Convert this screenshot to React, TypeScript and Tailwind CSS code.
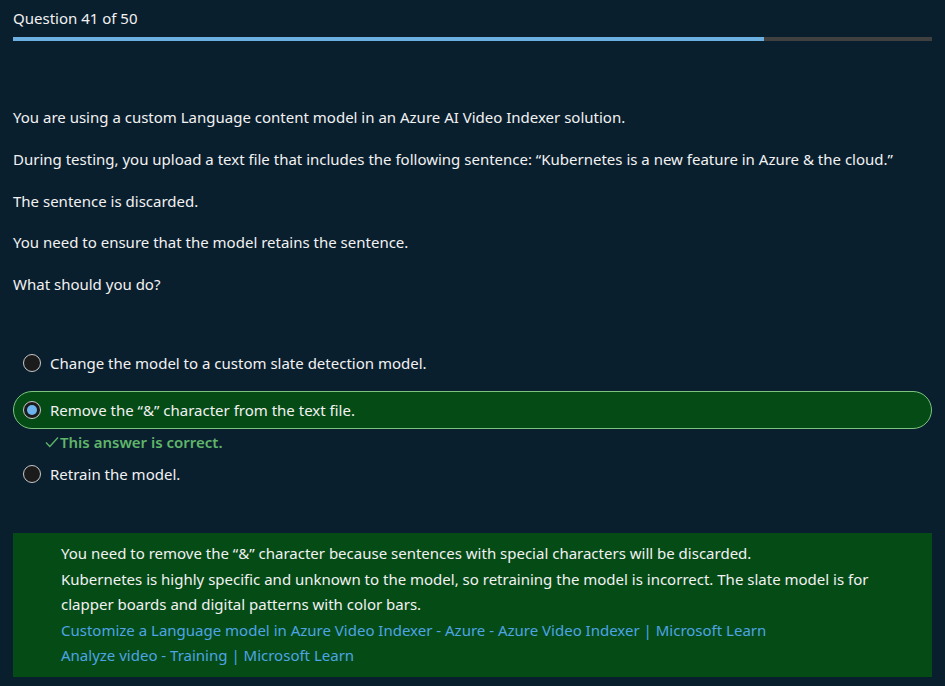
import { useState } from 'react';

const options = [
  'Change the model to a custom slate detection model.',
  'Remove the “&” character from the text file.',
  'Retrain the model.',
];

function Radio({ checked }: { checked: boolean }) {
  return (
    <span className="flex h-[18px] w-[18px] shrink-0 items-center justify-center rounded-full border border-[#c8c8c8] bg-[#1b1b1b]">
      {checked && <span className="h-[10px] w-[10px] rounded-full bg-[#6cb4ee]" />}
    </span>
  );
}

export default function App() {
  const [selected] = useState(1);

  return (
    <div
      className="min-h-screen bg-[#0a1f2e] px-[13px] text-[15px] text-[#f2f2f2]"
      style={{ fontFamily: '"Noto Sans", "Open Sans", sans-serif' }}
    >
      {/* Header */}
      <div className="pt-[8px] text-[15px] leading-5">Question 41 of 50</div>
      <div className="mt-[9px] h-[4px] w-full bg-[#404040]">
        <div className="h-full w-[81.7%] bg-[#6cb0e2]" />
      </div>

      {/* Question text */}
      <div className="mt-[66px] flex flex-col gap-[20.75px] leading-[21px]">
        <p>You are using a custom Language content model in an Azure AI Video Indexer solution.</p>
        <p>During testing, you upload a text file that includes the following sentence: “Kubernetes is a new feature in Azure &amp; the cloud.”</p>
        <p>The sentence is discarded.</p>
        <p>You need to ensure that the model retains the sentence.</p>
        <p>What should you do?</p>
      </div>

      {/* Options */}
      <div className="mt-[49px] flex flex-col">
        {options.map((opt, i) => (
          <div key={opt}>
            <div
              className={
                i === selected
                  ? 'flex h-[38px] items-center gap-[9px] rounded-full border border-[#7cc47f] bg-[#054b16] pl-[9px]'
                  : 'flex h-[38px] items-center gap-[9px] border border-transparent pl-[9px]'
              }
            >
              <Radio checked={i === selected} />
              <span className="leading-5">{opt}</span>
            </div>
            {i === 0 && <div className="h-[9px]" />}
            {i === selected && (
              <div className="flex h-[26px] items-center pl-[32px] font-semibold leading-5 text-[#5fb56a]">
                <svg width="14" height="12" viewBox="0 0 14 12" fill="none" className="mr-[1px]">
                  <path d="M1 6.5 L4.8 10.5 L13 1.5" stroke="#5fb56a" strokeWidth="1.3" />
                </svg>
                This answer is correct.
              </div>
            )}
          </div>
        ))}
      </div>

      {/* Explanation */}
      <div className="mt-[40px] bg-[#054b16] py-[8px] pl-[48px] pr-[20px] leading-[25.5px]">
        <p>You need to remove the “&amp;” character because sentences with special characters will be discarded.</p>
        <p>
          Kubernetes is highly specific and unknown to the model, so retraining the model is incorrect. The slate model is for
          clapper boards and digital patterns with color bars.
        </p>
        <p>
          <a className="text-[#4ea4e4]" href="#">
            Customize a Language model in Azure Video Indexer - Azure - Azure Video Indexer | Microsoft Learn
          </a>
        </p>
        <p>
          <a className="text-[#4ea4e4]" href="#">
            Analyze video - Training | Microsoft Learn
          </a>
        </p>
      </div>
    </div>
  );
}
